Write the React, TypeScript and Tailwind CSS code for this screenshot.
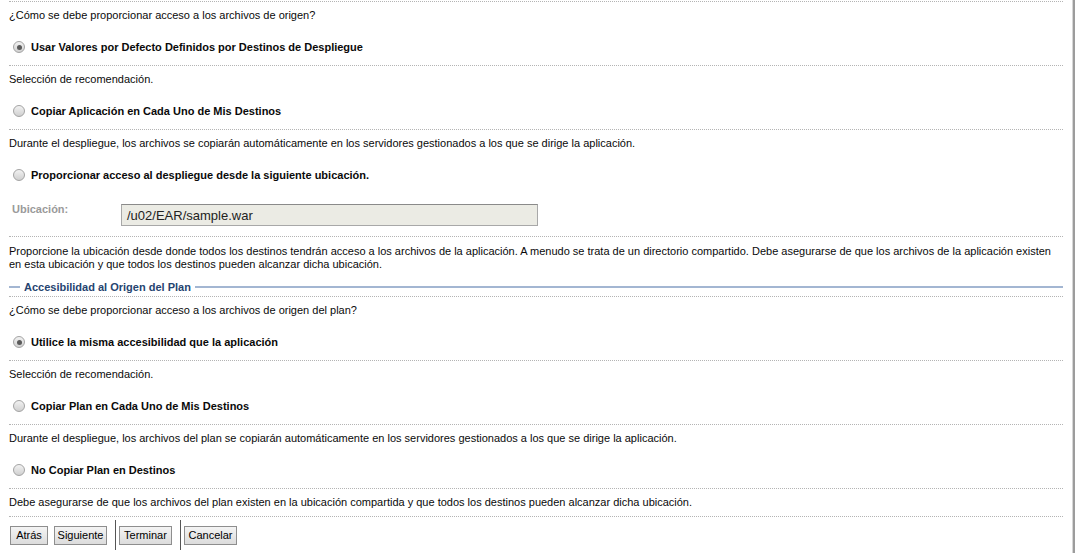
import React from "react";

const Line = () => <div className="border-t border-dotted border-[#b4b4b4]" />;

const TextRow = ({ children }: { children: React.ReactNode }) => (
  <div className="h-[27px] flex items-center leading-[13px]">{children}</div>
);

const Radio = ({ checked }: { checked?: boolean }) => (
  <div className="w-[12px] h-[12px] rounded-full border border-[#a3a3a3] bg-linear-to-b from-[#f2f2f2] to-[#d0d0d0] flex items-center justify-center">
    {checked && <div className="w-[5px] h-[5px] rounded-full bg-[#5a5a5a]" />}
  </div>
);

const RadioRow = ({ label, checked }: { label: string; checked?: boolean }) => (
  <div className="h-[36px] flex items-center pl-[4px] gap-[6px]">
    <Radio checked={checked} />
    <span className="font-bold leading-[13px]">{label}</span>
  </div>
);

const Btn = ({ label, w }: { label: string; w: string }) => (
  <div
    className={`${w} h-[19px] flex items-center justify-center border border-[#8e8e8e] bg-linear-to-b from-[#f4f4f4] to-[#dcdcdc] text-[11px] leading-[13px] text-black`}
  >
    {label}
  </div>
);

export default function App() {
  return (
    <div className="flex w-[1075px] h-[553px] bg-white overflow-hidden font-['Liberation_Sans',Arial,sans-serif] text-[11px] text-[#0a0a0a]">
      <div className="w-[1072px] px-[9px] pt-px flex flex-col">
        <Line />
        <TextRow>¿Cómo se debe proporcionar acceso a los archivos de origen?</TextRow>
        <RadioRow checked label="Usar Valores por Defecto Definidos por Destinos de Despliegue" />
        <Line />
        <TextRow>Selección de recomendación.</TextRow>
        <RadioRow label="Copiar Aplicación en Cada Uno de Mis Destinos" />
        <Line />
        <TextRow>
          Durante el despliegue, los archivos se copiarán automáticamente en los servidores gestionados a los que se dirige la aplicación.
        </TextRow>
        <RadioRow label="Proporcionar acceso al despliegue desde la siguiente ubicación." />
        <div className="h-[43px] flex items-start pt-[11px]">
          <div className="ml-[3px] w-[109px] font-bold text-[#9a9a9a] leading-[13px] -mt-[1px]">Ubicación:</div>
          <div className="w-[417px] h-[22px] border border-[#a8a8a8] border-t-[#8a8a8a] bg-[#ebebe4] flex items-center pl-[5px] text-[13px] text-[#222] leading-[15px]">
            /u02/EAR/sample.war
          </div>
        </div>
        <Line />
        <div className="pt-[8px] pb-[7px] leading-[13px]">
          Proporcione la ubicación desde donde todos los destinos tendrán acceso a los archivos de la aplicación. A menudo se trata de un directorio compartido. Debe asegurarse de que los archivos de la aplicación existen
          <br />
          en esta ubicación y que todos los destinos pueden alcanzar dicha ubicación.
        </div>
        <div className="h-[18px] flex items-center">
          <div className="w-[11px] h-[2px] bg-[#a3b6d2]" />
          <span className="mx-[4px] font-bold text-[#264470] leading-[13px]">Accesibilidad al Origen del Plan</span>
          <div className="flex-1 h-[2px] bg-[#a3b6d2]" />
        </div>
        <Line />
        <TextRow>¿Cómo se debe proporcionar acceso a los archivos de origen del plan?</TextRow>
        <RadioRow checked label="Utilice la misma accesibilidad que la aplicación" />
        <Line />
        <TextRow>Selección de recomendación.</TextRow>
        <RadioRow label="Copiar Plan en Cada Uno de Mis Destinos" />
        <Line />
        <TextRow>
          Durante el despliegue, los archivos del plan se copiarán automáticamente en los servidores gestionados a los que se dirige la aplicación.
        </TextRow>
        <RadioRow label="No Copiar Plan en Destinos" />
        <Line />
        <TextRow>
          Debe asegurarse de que los archivos del plan existen en la ubicación compartida y que todos los destinos pueden alcanzar dicha ubicación.
        </TextRow>
        <Line />
        <div className="mt-[3px] h-[30px] flex items-center pl-px">
          <Btn label="Atrás" w="w-[38px]" />
          <div className="w-[6px]" />
          <Btn label="Siguiente" w="w-[53px]" />
          <div className="ml-[8px] mr-[3px] self-stretch w-px bg-[#555]" />
          <Btn label="Terminar" w="w-[53px]" />
          <div className="ml-[8px] mr-[3px] self-stretch w-px bg-[#555]" />
          <Btn label="Cancelar" w="w-[53px]" />
        </div>
      </div>
      <div className="w-px bg-[#d6d6d6]" />
      <div className="w-[2px] bg-[#9c9c9c]" />
    </div>
  );
}
